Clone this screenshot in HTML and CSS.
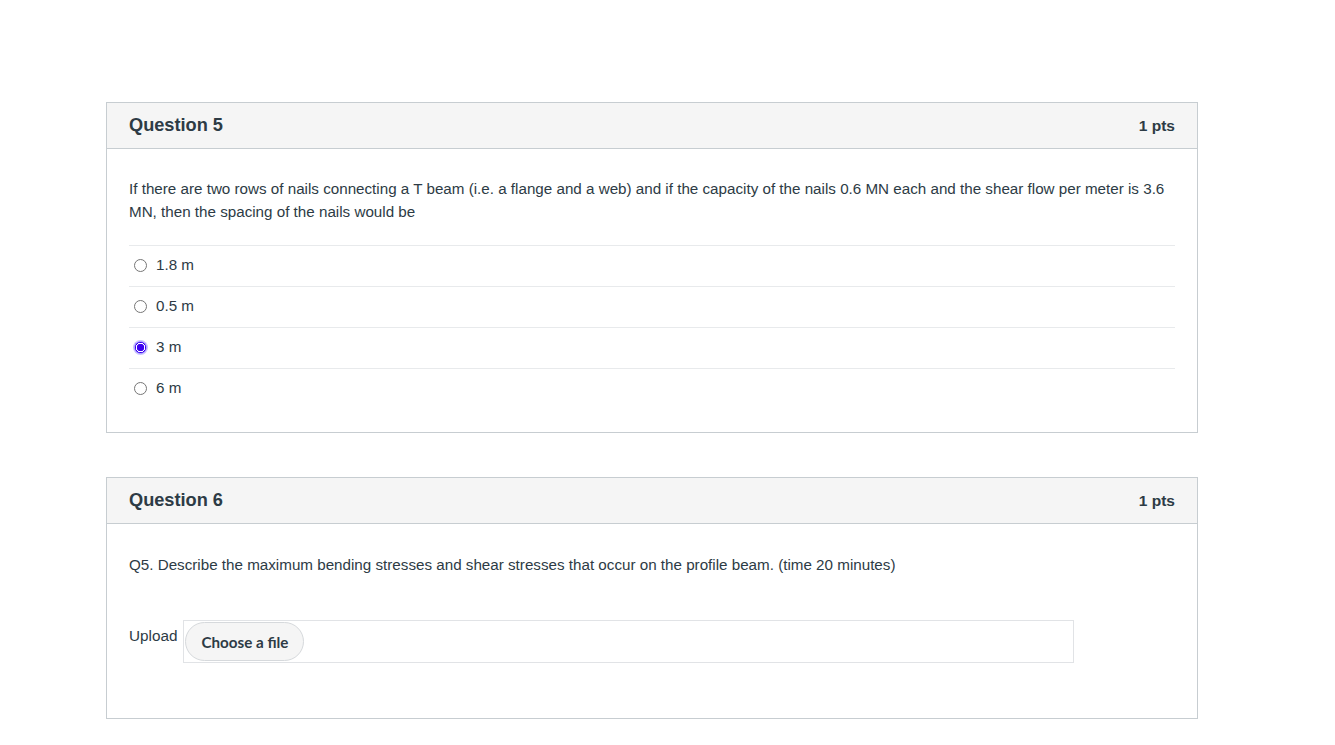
FILE: index.html
```html
<!DOCTYPE html>
<html>
<head>
<meta charset="utf-8">
<link rel="stylesheet" href="styles.css">
</head>
<body>
<div class="page">
  <div class="card">
    <div class="card-head">
      <span class="q-title">Question 5</span>
      <span class="q-pts">1 pts</span>
    </div>
    <div class="card-body">
      <p class="q-text">If there are two rows of nails connecting a T beam (i.e. a flange and a web) and if the capacity of the nails 0.6 MN each and the shear flow per meter is 3.6 MN, then the spacing of the nails would be</p>
      <div class="answers">
        <label class="answer"><span class="radio"></span><span>1.8 m</span></label>
        <label class="answer"><span class="radio"></span><span>0.5 m</span></label>
        <label class="answer"><span class="radio checked"></span><span>3 m</span></label>
        <label class="answer"><span class="radio"></span><span>6 m</span></label>
      </div>
    </div>
  </div>

  <div class="card">
    <div class="card-head">
      <span class="q-title">Question 6</span>
      <span class="q-pts">1 pts</span>
    </div>
    <div class="card-body body2">
      <p class="q-text">Q5. Describe the maximum bending stresses and shear stresses that occur on the profile beam. (time 20 minutes)</p>
      <div class="upload-row">
        <span class="upload-label">Upload</span>
        <div class="upload-box">
          <span class="choose-btn">Choose a file</span>
        </div>
      </div>
    </div>
  </div>
</div>
</body>
</html>
```

FILE: styles.css
```css
html, body {
  margin: 0;
  padding: 0;
  background: #ffffff;
}
body {
  font-family: "Liberation Sans", Arial, sans-serif;
  color: #2d3b45;
}
.page {
  padding: 102px 0 0 106px;
  display: flex;
  flex-direction: column;
  gap: 44px;
}
.card {
  width: 1092px;
  box-sizing: border-box;
  border: 1px solid #c7cdd1;
  background: #fff;
}
.card-head {
  height: 45px;
  border-bottom: 1px solid #c7cdd1;
  background: #f5f5f5;
  display: flex;
  align-items: center;
  justify-content: space-between;
  padding: 0 22px;
}
.q-title {
  font-weight: bold;
  font-size: 18.2px;
}
.q-pts {
  font-weight: bold;
  font-size: 15.5px;
}
.card-body {
  padding: 28px 22px 23px 22px;
}
.q-text {
  margin: 0;
  font-size: 15.2px;
  line-height: 23px;
}
.answers {
  margin-top: 22px;
}
.answer {
  display: flex;
  align-items: center;
  height: 40px;
  box-sizing: content-box;
  border-top: 1px solid #e8eaec;
  font-size: 15.2px;
  padding-left: 5px;
  gap: 9px;
}
.answer > span:last-child {
  margin-top: -3px;
}
.radio {
  width: 11px;
  height: 11px;
  border: 1px solid #767676;
  border-radius: 50%;
  box-sizing: content-box;
  display: inline-block;
  margin-top: -1px;
}
.radio.checked {
  border-color: #9a8cff;
  background: radial-gradient(circle, #3b00f0 0 3.5px, #ffffff 4px 4.5px, #3b00f0 5px);
  box-shadow: 0 0 0 1px #c9c1ff;
}
.body2 {
  padding-top: 29px;
  padding-bottom: 55px;
}
.upload-row {
  margin-top: 44px;
  display: flex;
  align-items: flex-start;
  gap: 6px;
}
.upload-label {
  font-size: 15.3px;
  line-height: 16px;
  margin-top: 8px;
}
.upload-box {
  width: 891px;
  height: 43px;
  box-sizing: border-box;
  border: 1px solid #e1e3e6;
  padding: 1px;
  display: flex;
  align-items: center;
}
.choose-btn {
  font-family: Lato, "Liberation Sans", sans-serif;
  font-weight: bold;
  font-size: 15.2px;
  height: 39px;
  width: 119px;
  box-sizing: border-box;
  border: 1px solid #d6d9dc;
  border-radius: 20px;
  background: #f5f5f5;
  display: flex;
  align-items: center;
  justify-content: center;
  color: #2d3b45;
}
```
